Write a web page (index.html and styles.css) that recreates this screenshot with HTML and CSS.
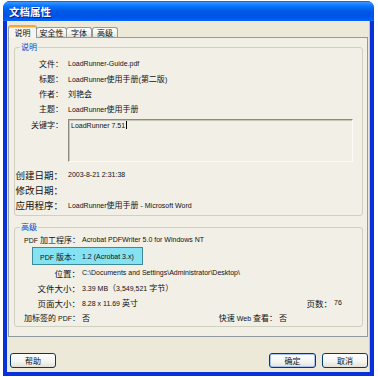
FILE: index.html
```html
<!DOCTYPE html>
<html lang="zh-CN">
<head>
<meta charset="utf-8">
<title>文档属性</title>
<link rel="stylesheet" href="styles.css">
</head>
<body>
<div class="win">
  <div class="title">文档属性</div>
  <div class="client">
    <div class="tabs">
      <div class="tab sel">说明</div>
      <div class="tab t2">安全性</div>
      <div class="tab t3">字体</div>
      <div class="tab t4">高级</div>
    </div>
    <div class="page">
      <div class="grp g1">
        <span class="lg">说明</span>
        <div class="row"><span class="lb c">文件：</span><span class="val">LoadRunner-Guide.pdf</span></div>
        <div class="row"><span class="lb c">标题：</span><span class="val">LoadRunner<span class="c">使用手册</span>(<span class="c">第二版</span>)</span></div>
        <div class="row"><span class="lb c">作者：</span><span class="val c">刘艳会</span></div>
        <div class="row"><span class="lb c">主题：</span><span class="val">LoadRunner<span class="c">使用手册</span></span></div>
        <div class="row kw"><span class="lb c">关键字：</span><div class="ta">LoadRunner 7.51<span class="caret"></span></div></div>
        <div class="row dt"><span class="lb cb">创建日期：</span><span class="val">2003-8-21 2:31:38</span></div>
        <div class="row"><span class="lb cb">修改日期：</span><span class="val"></span></div>
        <div class="row"><span class="lb cb">应用程序：</span><span class="val">LoadRunner<span class="c">使用手册</span> - Microsoft Word</span></div>
      </div>
      <div class="grp g2">
        <span class="lg">高级</span>
        <div class="row"><span class="lb2">PDF <span class="c">加工程序：</span></span><span class="val2">Acrobat PDFWriter 5.0 for Windows NT</span></div>
        <div class="row hl"><span class="lb3">PDF <span class="c">版本：</span></span><span class="val2">1.2 (Acrobat 3.x)</span></div>
        <div class="row"><span class="lb2 cm">位置：</span><span class="val2">C:\Documents and Settings\Administrator\Desktop\</span></div>
        <div class="row"><span class="lb2 cm">文件大小：</span><span class="val2">3.39 MB<span class="c">（</span>3,549,521 <span class="c">字节）</span></span></div>
        <div class="row"><span class="lb2 cm">页面大小：</span><span class="val2 w5">8.28 x 11.69 <span class="c">英寸</span></span><span class="lb4 cm">页数：</span><span class="val2">76</span></div>
        <div class="row"><span class="lb2"><span class="c">加标签的</span> PDF<span class="c">：</span></span><span class="val2 w6 c">否</span><span class="lb5"><span class="c">快速</span> Web <span class="c">查看：</span></span><span class="val2 c">否</span></div>
      </div>
    </div>
    <div class="btns">
      <button class="btn">帮助</button>
      <span class="sp"></span>
      <button class="btn def">确定</button>
      <button class="btn">取消</button>
    </div>
  </div>
</div>
</body>
</html>
```

FILE: styles.css
```css
html, body {
  margin: 0;
  padding: 0;
  background: #fff;
}
body {
  font-family: "Liberation Sans", "Noto Sans CJK SC", sans-serif;
  font-size: 7px;
  color: #111;
}
.c {
  font-family: "Noto Sans CJK SC", sans-serif;
  font-size: 8px;
}
.cb {
  font-family: "Noto Sans CJK SC", sans-serif;
  font-size: 9.5px;
}
.cm {
  font-family: "Noto Sans CJK SC", sans-serif;
  font-size: 8.5px;
}
.win {
  margin: 1px 0 0 3px;
  width: 371px;
  height: 375px;
  display: flex;
  flex-direction: column;
  background: #0831d9;
  border-radius: 7px 7px 0 0;
  overflow: hidden;
}
.title {
  height: 20px;
  flex: none;
  display: flex;
  align-items: center;
  padding-left: 6px;
  font-family: "Noto Sans CJK SC", sans-serif;
  font-weight: bold;
  font-size: 10.5px;
  color: #fff;
  text-shadow: 1px 1px 0 #0a1883;
  background: linear-gradient(to bottom, #0058ee 0%, #3a93ff 8%, #288eff 12%, #127dff 20%, #036ffc 30%, #0262ee 40%, #0057e5 55%, #0054e3 70%, #0055eb 85%, #005bf5 92%, #026afe 100%);
}
.client {
  flex: 1;
  margin: 0 4px 4px 4px;
  background: #ece9d8;
  display: flex;
  flex-direction: column;
  padding: 4px 0 0 1px;
  box-shadow: inset -1px 0 0 #c8c4b4;
}
.tabs {
  height: 12px;
  display: flex;
  align-items: flex-end;
  position: relative;
  z-index: 2;
}
.tab {
  height: 10px;
  box-sizing: border-box;
  border: 1px solid #919b9c;
  border-bottom: none;
  border-radius: 3px 3px 0 0;
  background: linear-gradient(#ffffff, #f3f2ec 60%, #e4e1d4);
  font-family: "Noto Sans CJK SC", sans-serif;
  font-size: 8px;
  line-height: 9px;
  text-align: center;
  margin-left: -1px;
}
.tab.sel {
  height: 13px;
  width: 29px;
  margin-left: 0;
  margin-bottom: -1px;
  background: #f6f5f0;
  border-top: 2px solid #f3a83a;
  box-shadow: inset 0 1px 0 #ffd36a;
  line-height: 11px;
  position: relative;
  z-index: 3;
}
.t2 { width: 31px; }
.t3 { width: 26px; }
.t4 { width: 26px; margin-left: 0; }
.page {
  width: 360px;
  height: 300px;
  box-sizing: border-box;
  border: 1px solid #919b9c;
  background: #f1efe6;
  display: flex;
  flex-direction: column;
  padding-top: 1px;
}
.grp {
  position: relative;
  border: 1px solid #d0d0bf;
  border-radius: 3px;
  margin: 8px 4px 0 5px;
  padding: 8px 0 3px 0;
}
.g2 {
  margin-top: 11px;
  padding-top: 4px;
  padding-bottom: 1px;
}
.lg {
  position: absolute;
  top: -7px;
  left: 5px;
  padding: 0 1px;
  background: #f1efe6;
  color: #0046d5;
  font-family: "Noto Sans CJK SC", sans-serif;
  font-size: 8px;
  line-height: 12px;
}
.row {
  display: flex;
  align-items: center;
  height: 15px;
  white-space: nowrap;
}
.lb {
  flex: none;
  width: 48px;
  text-align: right;
}
.val {
  margin-left: 5px;
}
.kw {
  height: 43px;
  align-items: flex-start;
  margin-top: 3px;
}
.kw .lb {
  line-height: 11px;
}
.ta {
  margin-left: 5px;
  width: 285px;
  height: 43px;
  box-sizing: border-box;
  border: 1px solid;
  border-color: #8d8a7d #fbfaf6 #fbfaf6 #8d8a7d;
  box-shadow: inset 1px 1px 0 #c9c5b5;
  padding: 1px 2px;
  line-height: 10px;
}
.caret {
  display: inline-block;
  width: 1px;
  height: 8px;
  background: #000;
  vertical-align: -1px;
  margin-left: 1px;
}
.dt {
  margin-top: 5px;
}
.lb2 {
  flex: none;
  width: 65px;
  text-align: right;
}
.val2 {
  margin-left: 2px;
}
.hl {
  height: 18px;
  width: 111px;
  box-sizing: border-box;
  margin-left: 17px;
  background: #84e2f2;
  border: 1px solid #3d8b99;
}
.lb3 {
  flex: none;
  width: 47px;
  text-align: right;
}
.w5 { width: 154px; }
.lb4 { flex: none; width: 96px; text-align: right; }
.w6 { width: 40px; }
.lb5 { flex: none; width: 155px; text-align: right; }
.btns {
  display: flex;
  align-items: center;
  margin-top: 16px;
  padding: 0 2px 0 2px;
  gap: 6px;
}
.sp { flex: 1; }
.btn {
  width: 46px;
  height: 15px;
  padding: 0;
  border: 1px solid #003c74;
  border-radius: 3px;
  background: linear-gradient(#ffffff, #f4f4f0 60%, #e3e0d6);
  font-family: "Noto Sans CJK SC", sans-serif;
  font-size: 8px;
  line-height: 12px;
  color: #111;
}
.def {
  width: 47px;
  box-shadow: inset 0 0 0 1px #a9c4f2;
}
```
